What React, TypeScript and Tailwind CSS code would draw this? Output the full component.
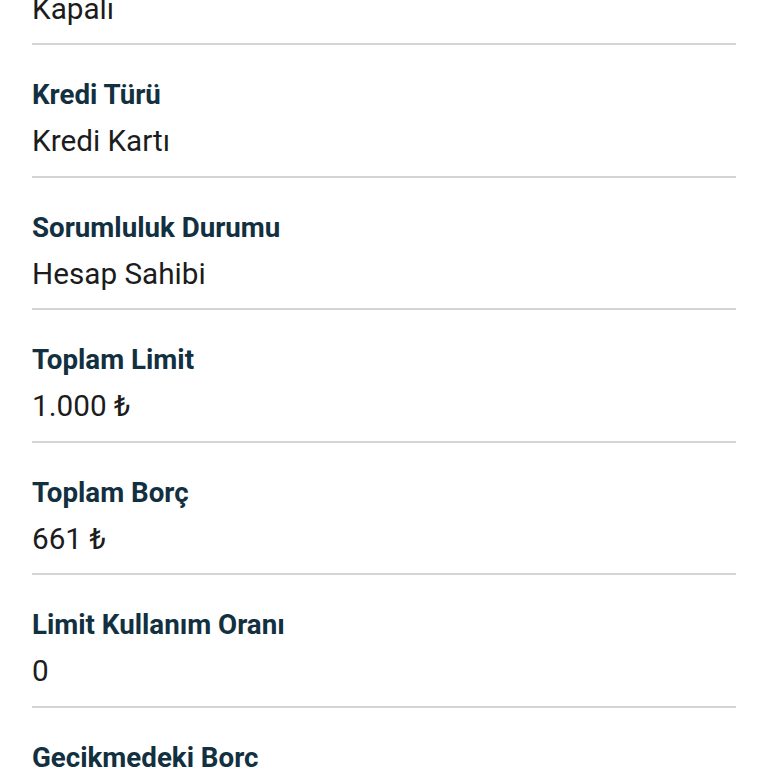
import React from "react";

const items: { label: string; value: string }[] = [
  { label: "\u00a0", value: "Kapalı" },
  { label: "Kredi Türü", value: "Kredi Kartı" },
  { label: "Sorumluluk Durumu", value: "Hesap Sahibi" },
  { label: "Toplam Limit", value: "1.000 ₺" },
  { label: "Toplam Borç", value: "661 ₺" },
  { label: "Limit Kullanım Oranı", value: "0" },
  { label: "Gecikmedeki Borc", value: "0 ₺" },
];

export default function App() {
  return (
    <div
      className="w-[768px] h-[768px] overflow-hidden bg-white"
      style={{ fontFamily: "Roboto, 'Noto Sans', sans-serif" }}
    >
      <div className="mt-[-87.5px] pl-[32px] pr-[32px]">
        {items.map((it, i) => (
          <div key={i} className="border-b-2 border-[#d4d4d4] pt-[34px] pb-[16.5px]">
            <div className="text-[27.7px] leading-[32px] font-bold text-[#12303f]">
              {it.label}
            </div>
            <div className="mt-[12px] text-[29.7px] leading-[36px] text-[#1c1c1c]">
              {it.value}
            </div>
          </div>
        ))}
      </div>
    </div>
  );
}
